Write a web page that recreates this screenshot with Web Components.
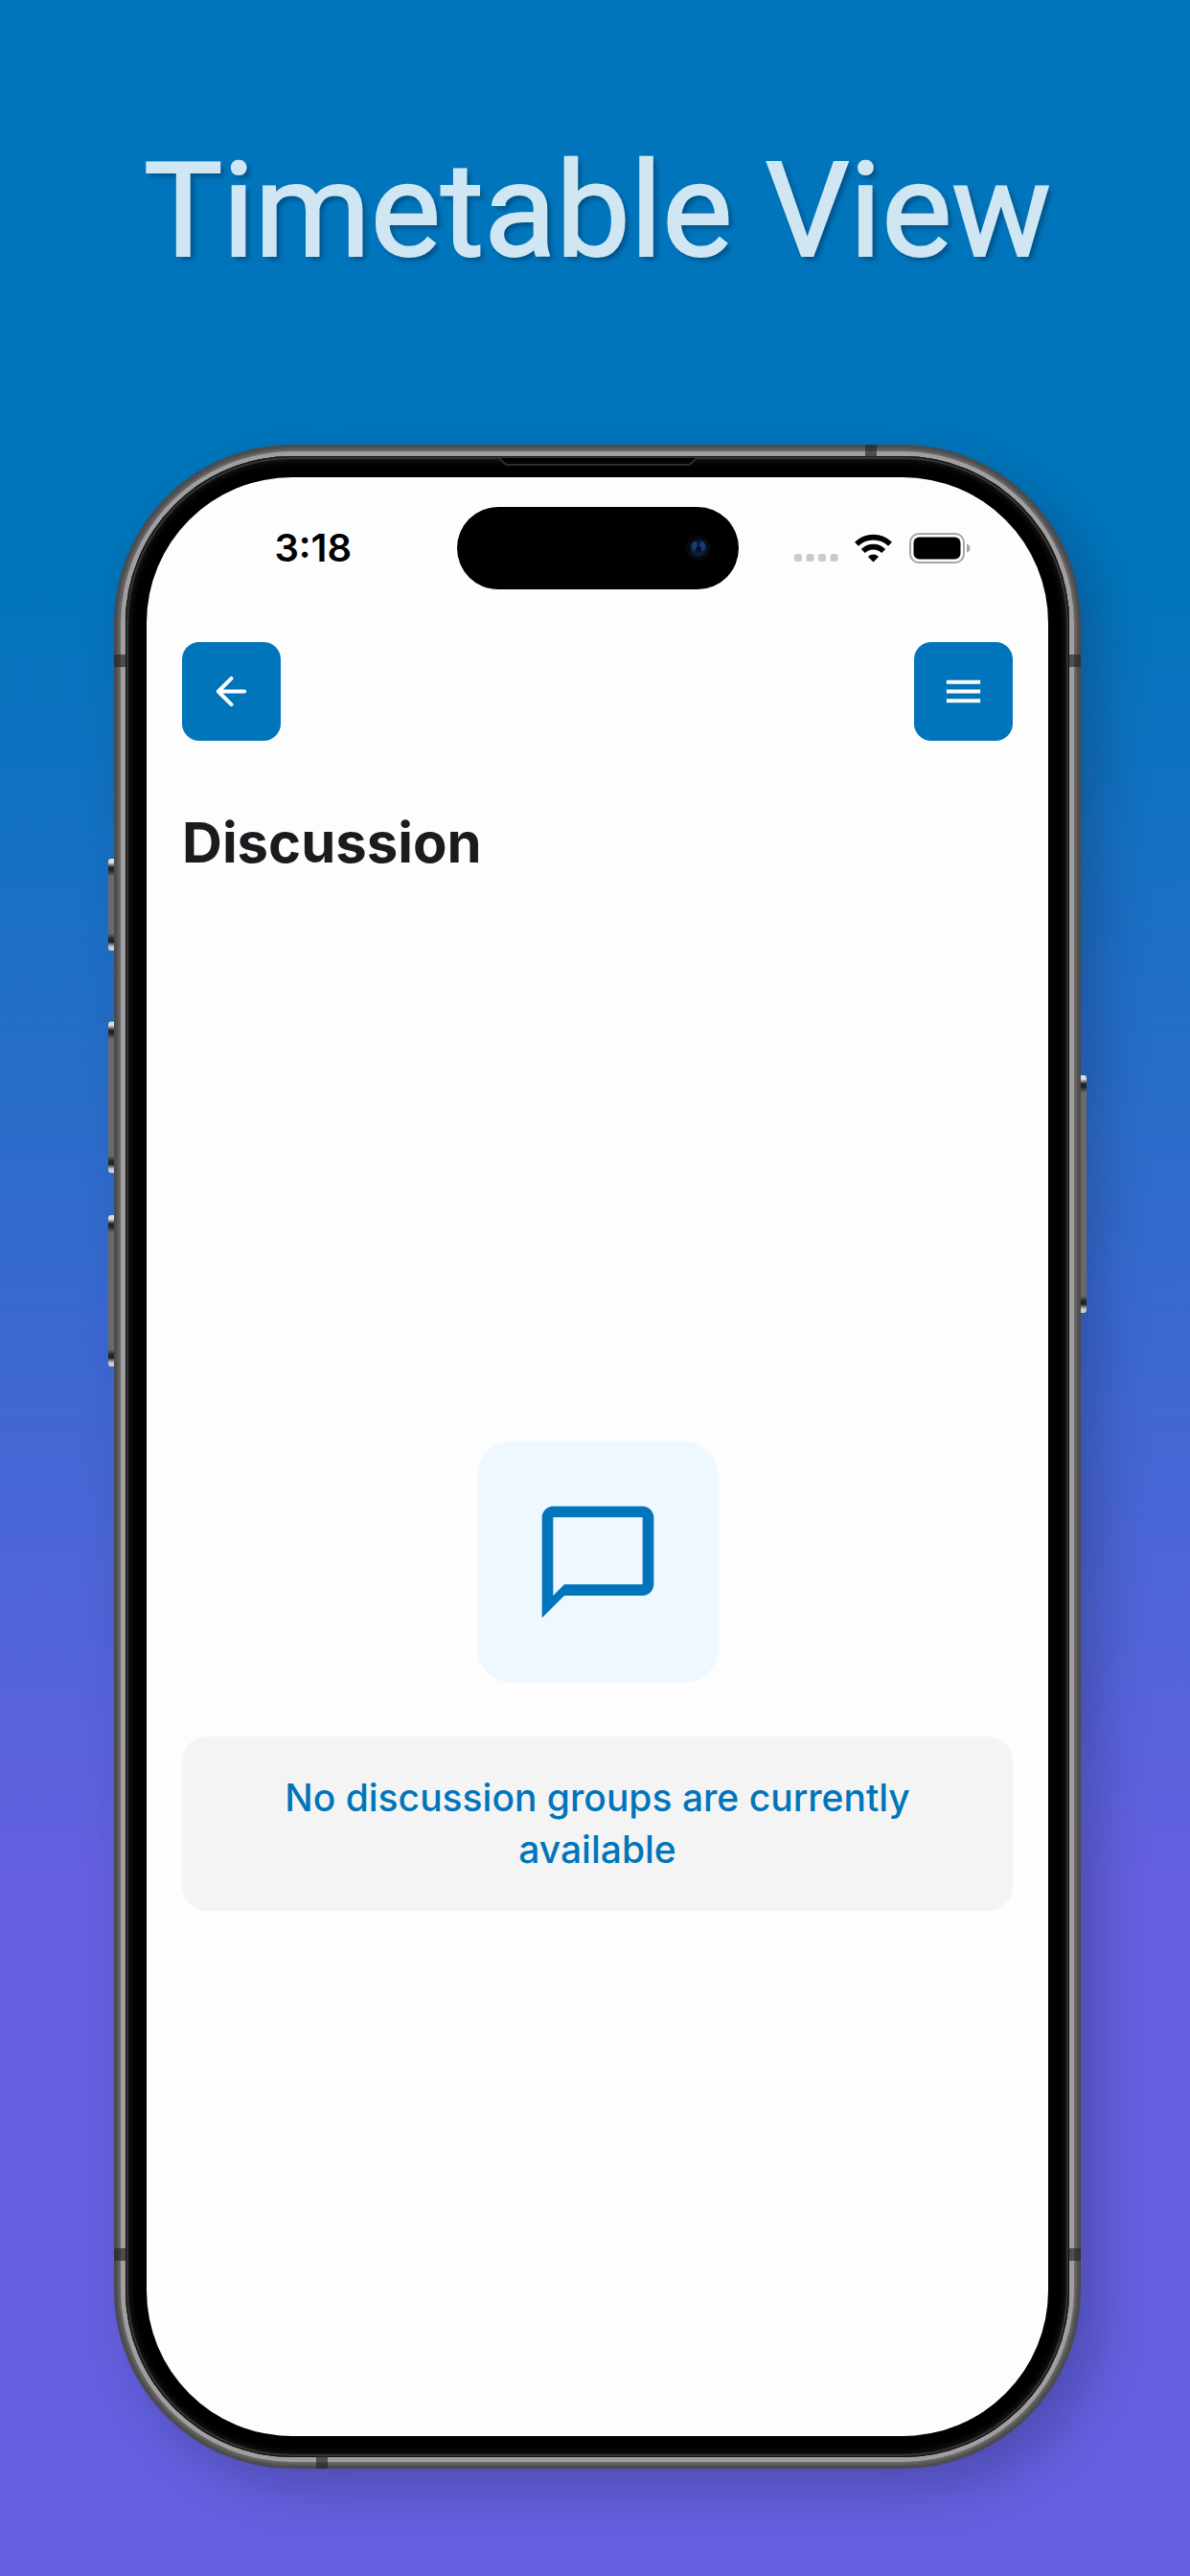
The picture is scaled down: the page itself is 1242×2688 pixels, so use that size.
<!DOCTYPE html>
<html lang="en">
  <head>
    <meta charset="utf-8" />
    <title>Timetable View</title>
    <meta name="viewport" content="width=device-width, initial-scale=1" />
    <style>
      body {
        margin: 0;
        font-family: Inter, 'Liberation Sans', sans-serif;
      }
    </style>

    <template id="showcaseTemplate">
      <style>
        :host {
          display: flex;
          flex-direction: column;
          box-sizing: border-box;
          min-height: 100vh;
          padding: 140px 114px 112px 119px;
          background: linear-gradient(#0075bb 22%, #6560e0 73%);
        }
        h1 {
          margin: 0 0 164px;
          font: 400 138px/160px Roboto, sans-serif;
          text-align: center;
          white-space: nowrap;
          color: #d0e6f3;
          -webkit-text-stroke: 2px #d0e6f3;
          text-shadow: 4px 4px 5px rgba(0, 30, 60, 0.4);
        }
        ::slotted(phone-frame) {
          flex: 1;
        }
      </style>
      <h1><slot name="title"></slot></h1>
      <slot></slot>
    </template>

    <template id="phoneTemplate">
      <style>
        :host {
          display: flex;
          position: relative;
          box-sizing: border-box;
          padding: 12px;
          border-radius: 186px;
          background: #4b4a4b;
          box-shadow: 20px 22px 50px rgba(20, 30, 70, 0.28);
        }
        .metal,
        .bezel {
          display: flex;
          flex: 1;
          box-sizing: border-box;
        }
        .metal {
          margin: -5px;
          padding: 5px;
          border-radius: 180px;
          background: #a09e9e;
          box-shadow: 0 0 4px 2px #777576;
        }
        .bezel {
          position: relative;
          padding: 22px;
          border-radius: 174px;
          background: #000;
          box-shadow: inset 0 0 0 1px #111, inset 0 0 0 3px #343434,
            inset 0 0 9px 3px #242424;
        }
        .screen {
          display: flex;
          flex-direction: column;
          flex: 1;
          border-radius: 152px;
          overflow: hidden;
          background: #fdfdfd;
        }
        /* hardware keys and antenna bands sit over the frame edge */
        .key {
          position: absolute;
          width: 6px;
          left: -6px;
          border-radius: 3px 0 0 3px;
          background: linear-gradient(
            #ddd 0 4px,
            #222 9px 12px,
            #6b696b 18px calc(100% - 18px),
            #222 calc(100% - 12px) calc(100% - 9px),
            #ccc calc(100% - 4px)
          );
        }
        .key.right {
          left: auto;
          right: -6px;
          border-radius: 0 3px 3px 0;
        }
        .band {
          position: absolute;
          width: 12px;
          height: 13px;
          background: rgba(35, 35, 37, 0.65);
        }
        .speaker {
          position: absolute;
          top: 2px;
          left: 50%;
          width: 206px;
          height: 8px;
          transform: translateX(-50%);
        }
      </style>
      <div class="metal">
        <div class="bezel">
          <svg class="speaker" viewBox="0 0 206 8" aria-hidden="true">
            <path d="M0 0l7 7h192l7-7z" fill="#000" />
            <path d="M0 0l5 5q2 2 4 2h188q2 0 4-2l5-5" fill="none" stroke="#2c2c2c" stroke-width="2" />
          </svg>
          <div class="screen"><slot></slot></div>
        </div>
      </div>
      <i class="key" style="top: 432px; height: 96px"></i>
      <i class="key" style="top: 602px; height: 158px"></i>
      <i class="key" style="top: 804px; height: 158px"></i>
      <i class="key right" style="top: 658px; height: 248px"></i>
      <i class="band" style="top: 219px; left: 0"></i>
      <i class="band" style="top: 219px; right: 0"></i>
      <i class="band" style="bottom: 217px; left: 0"></i>
      <i class="band" style="bottom: 217px; right: 0"></i>
      <i class="band" style="top: 0; right: 213px"></i>
      <i class="band" style="bottom: 0; left: 211px"></i>
    </template>

    <template id="statusTemplate">
      <style>
        :host {
          display: grid;
          grid-template-columns: 1fr 294px 1fr;
          align-items: center;
          margin-top: 31px;
          height: 86px;
        }
        time {
          padding-left: 24px;
          font-size: 40px;
          font-weight: 600;
          line-height: 48px;
          text-align: center;
          color: #000;
        }
        .island {
          display: flex;
          align-items: center;
          justify-content: flex-end;
          box-sizing: border-box;
          height: 86px;
          padding-right: 28px;
          border-radius: 43px;
          background: #000;
        }
        .icons {
          display: flex;
          align-items: center;
          padding-left: 58px;
        }
        .wifi {
          margin: 0 18px 0 17px;
        }
      </style>
      <time><slot></slot></time>
      <div class="island">
        <svg width="28" height="28" viewBox="0 0 28 28" aria-hidden="true">
          <circle cx="14" cy="14" r="13" fill="#08090c" />
          <circle cx="14" cy="14" r="9" fill="#0a1c38" />
          <ellipse cx="10" cy="12" rx="3" ry="5" fill="#14406f" />
          <ellipse cx="18" cy="12" rx="3" ry="5" fill="#14406f" />
          <circle cx="14" cy="15" r="3" fill="#080e30" />
        </svg>
      </div>
      <div class="icons">
        <svg width="46" height="30" viewBox="0 0 46 30" fill="#cacaca" aria-label="No signal">
          <rect x="0" y="21" width="8" height="8" rx="2.5" />
          <rect x="12.5" y="21" width="8" height="8" rx="2.5" />
          <rect x="25" y="21" width="8" height="8" rx="2.5" />
          <rect x="37.5" y="21" width="8" height="8" rx="2.5" />
        </svg>
        <svg class="wifi" width="39" height="30" viewBox="0 0 39 30" aria-label="Wi-Fi">
          <g fill="none" stroke="#000" stroke-width="5.6">
            <path d="M2 10.8a25 25 0 0 1 35 0" />
            <path d="M8.8 18a15.3 15.3 0 0 1 21.400 0" />
          </g>
          <path d="M19.500 29.500l-5.600-5.600a8 8 0 0 1 11.200 0z" />
        </svg>
        <svg width="64" height="32" viewBox="0 0 64 32" aria-label="Battery full">
          <rect x="1" y="1" width="56" height="30" rx="9" fill="none" stroke="#a6a6a6" stroke-width="2" />
          <rect x="4.500" y="4.500" width="49" height="23" rx="6" />
          <path d="M60 11.500q3.500 1.500 3.500 4.500t-3.500 4.500z" fill="#a6a6a6" />
        </svg>
      </div>
    </template>

    <template id="iconButtonTemplate">
      <style>
        :host {
          display: block;
        }
        button {
          display: flex;
          align-items: center;
          justify-content: center;
          width: 103px;
          height: 103px;
          padding: 0;
          border: 0;
          border-radius: 18px;
          background: #0075bb;
          color: #fff;
          cursor: pointer;
        }
      </style>
      <button type="button"><slot></slot></button>
    </template>

    <template id="emptyTemplate">
      <style>
        :host {
          display: flex;
          flex-direction: column;
          align-items: center;
          gap: 56px;
        }
        .tile {
          display: flex;
          align-items: center;
          justify-content: center;
          width: 252px;
          height: 252px;
          border-radius: 36px;
          background: #eff7ff;
          color: #0075bb;
        }
        p {
          box-sizing: border-box;
          width: 100%;
          margin: 0;
          padding: 37px 96px;
          border-radius: 26px;
          background: #f4f4f4;
          color: #0075bb;
          font-size: 39px;
          font-weight: 500;
          line-height: 54px;
          text-align: center;
        }
      </style>
      <div class="tile"><slot name="icon"></slot></div>
      <p><slot></slot></p>
    </template>

    <template id="discussionTemplate">
      <style>
        :host {
          display: flex;
          flex-direction: column;
          flex: 1;
          padding: 55px 37px 0;
        }
        nav {
          display: flex;
          justify-content: space-between;
        }
        h2 {
          margin: 70px 0 0;
          font-size: 58px;
          font-weight: 700;
          line-height: 72px;
          color: #1b1b1f;
        }
        empty-state {
          margin-top: 589px;
        }
        svg {
          fill: currentColor;
        }
      </style>
      <nav>
        <icon-button label="Back">
          <svg width="47" height="47" viewBox="0 0 24 24" aria-hidden="true">
            <path d="M19 12H5M12 5l-7 7 7 7" fill="none" stroke="#fff" stroke-width="2" stroke-linecap="round" stroke-linejoin="round" />
          </svg>
        </icon-button>
        <icon-button label="Menu">
          <svg width="47" height="47" viewBox="0 0 24 24" aria-hidden="true">
            <path d="M3 18h18v-2H3v2zm0-5h18v-2H3v2zm0-7v2h18V6H3z" />
          </svg>
        </icon-button>
      </nav>
      <h2>Discussion</h2>
      <empty-state>
        <svg slot="icon" width="140" height="140" viewBox="0 0 24 24" aria-hidden="true">
          <path d="M20 2H4c-1.100 0-2 .9-2 2v18l4-4h14c1.100 0 2-.9 2-2V4c0-1.100-.9-2-2-2zm0 14H6l-2 2V4h16v12z" />
        </svg>
        No discussion groups are currently available
      </empty-state>
    </template>
  </head>

  <body>
    <store-showcase>
      <span slot="title">Timetable View</span>
      <phone-frame>
        <status-bar>3:18</status-bar>
        <discussion-view></discussion-view>
      </phone-frame>
    </store-showcase>

    <script>
      // base class: clones the given template into an open shadow root
      class TemplateElement extends HTMLElement {
        constructor(templateId) {
          super();
          const template = document.getElementById(templateId).content;
          this.attachShadow({ mode: 'open' }).appendChild(
            template.cloneNode(true)
          );
        }
      }

      customElements.define(
        'store-showcase',
        class extends TemplateElement {
          constructor() {
            super('showcaseTemplate');
          }
        }
      );

      customElements.define(
        'phone-frame',
        class extends TemplateElement {
          constructor() {
            super('phoneTemplate');
          }
        }
      );

      customElements.define(
        'status-bar',
        class extends TemplateElement {
          constructor() {
            super('statusTemplate');
          }
        }
      );

      customElements.define(
        'icon-button',
        class extends TemplateElement {
          constructor() {
            super('iconButtonTemplate');
          }
          connectedCallback() {
            this.shadowRoot
              .querySelector('button')
              .setAttribute('aria-label', this.getAttribute('label'));
          }
        }
      );

      customElements.define(
        'empty-state',
        class extends TemplateElement {
          constructor() {
            super('emptyTemplate');
          }
        }
      );

      customElements.define(
        'discussion-view',
        class extends TemplateElement {
          constructor() {
            super('discussionTemplate');
          }
        }
      );
    </script>
  </body>
</html>
